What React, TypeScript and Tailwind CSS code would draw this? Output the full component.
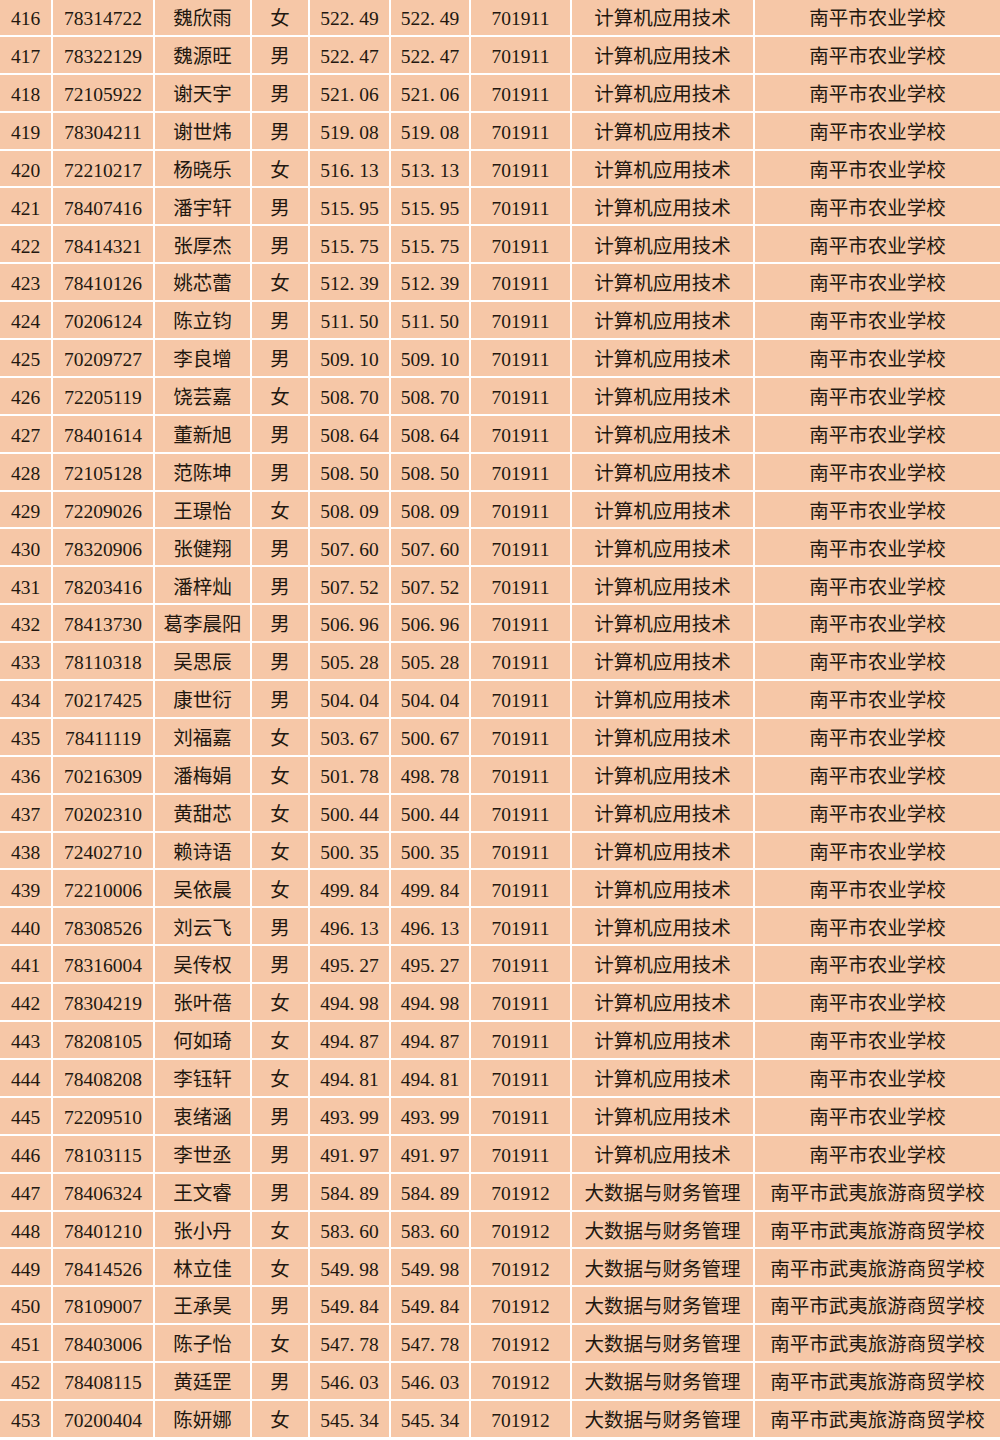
const A = ["701911", "计算机应用技术", "南平市农业学校"];
const B = ["701912", "大数据与财务管理", "南平市武夷旅游商贸学校"];

// no, id, name, sex, score, score2, group
const rows: [number, string, string, string, string, string, string[]][] = [
  [416, "78314722", "魏欣雨", "女", "522.49", "522.49", A],
  [417, "78322129", "魏源旺", "男", "522.47", "522.47", A],
  [418, "72105922", "谢天宇", "男", "521.06", "521.06", A],
  [419, "78304211", "谢世炜", "男", "519.08", "519.08", A],
  [420, "72210217", "杨晓乐", "女", "516.13", "513.13", A],
  [421, "78407416", "潘宇轩", "男", "515.95", "515.95", A],
  [422, "78414321", "张厚杰", "男", "515.75", "515.75", A],
  [423, "78410126", "姚芯蕾", "女", "512.39", "512.39", A],
  [424, "70206124", "陈立钧", "男", "511.50", "511.50", A],
  [425, "70209727", "李良增", "男", "509.10", "509.10", A],
  [426, "72205119", "饶芸嘉", "女", "508.70", "508.70", A],
  [427, "78401614", "董新旭", "男", "508.64", "508.64", A],
  [428, "72105128", "范陈坤", "男", "508.50", "508.50", A],
  [429, "72209026", "王璟怡", "女", "508.09", "508.09", A],
  [430, "78320906", "张健翔", "男", "507.60", "507.60", A],
  [431, "78203416", "潘梓灿", "男", "507.52", "507.52", A],
  [432, "78413730", "葛李晨阳", "男", "506.96", "506.96", A],
  [433, "78110318", "吴思辰", "男", "505.28", "505.28", A],
  [434, "70217425", "康世衍", "男", "504.04", "504.04", A],
  [435, "78411119", "刘福嘉", "女", "503.67", "500.67", A],
  [436, "70216309", "潘梅娟", "女", "501.78", "498.78", A],
  [437, "70202310", "黄甜芯", "女", "500.44", "500.44", A],
  [438, "72402710", "赖诗语", "女", "500.35", "500.35", A],
  [439, "72210006", "吴依晨", "女", "499.84", "499.84", A],
  [440, "78308526", "刘云飞", "男", "496.13", "496.13", A],
  [441, "78316004", "吴传权", "男", "495.27", "495.27", A],
  [442, "78304219", "张叶蓓", "女", "494.98", "494.98", A],
  [443, "78208105", "何如琦", "女", "494.87", "494.87", A],
  [444, "78408208", "李钰轩", "女", "494.81", "494.81", A],
  [445, "72209510", "衷绪涵", "男", "493.99", "493.99", A],
  [446, "78103115", "李世丞", "男", "491.97", "491.97", A],
  [447, "78406324", "王文睿", "男", "584.89", "584.89", B],
  [448, "78401210", "张小丹", "女", "583.60", "583.60", B],
  [449, "78414526", "林立佳", "女", "549.98", "549.98", B],
  [450, "78109007", "王承昊", "男", "549.84", "549.84", B],
  [451, "78403006", "陈子怡", "女", "547.78", "547.78", B],
  [452, "78408115", "黄廷罡", "男", "546.03", "546.03", B],
  [453, "70200404", "陈妍娜", "女", "545.34", "545.34", B],
];

// SimSun-style score: the point takes a half-width cell
function Score({ v }: { v: string }) {
  const [a, b] = v.split(".");
  return (
    <span>
      {a}
      <span className="inline-block w-[0.5em] text-left">.</span>
      {b}
    </span>
  );
}

function Cell({ children }: { children: React.ReactNode }) {
  return (
    <div className="flex items-center justify-center bg-[#f6c7a7] pt-[4px] whitespace-nowrap">
      {children}
    </div>
  );
}

export default function App() {
  return (
    <div className="w-[1000px] h-[1440px] overflow-hidden bg-white">
      <div
        className="mt-[-1px] flex flex-col gap-[2px] text-[19.5px] leading-none text-[#22170f]"
        style={{ fontFamily: '"Liberation Serif", "Noto Sans CJK SC", serif' }}
      >
        {rows.map(([no, id, name, sex, s1, s2, g]) => (
          <div
            key={no}
            className="grid h-[35.9px] grid-cols-[51px_100px_95px_56px_79px_78px_99px_181px_1fr] gap-[2px]"
          >
            <Cell>{no}</Cell>
            <Cell>{id}</Cell>
            <Cell>{name}</Cell>
            <Cell>{sex}</Cell>
            <Cell>
              <Score v={s1} />
            </Cell>
            <Cell>
              <Score v={s2} />
            </Cell>
            <Cell>{g[0]}</Cell>
            <Cell>{g[1]}</Cell>
            <Cell>{g[2]}</Cell>
          </div>
        ))}
      </div>
    </div>
  );
}
